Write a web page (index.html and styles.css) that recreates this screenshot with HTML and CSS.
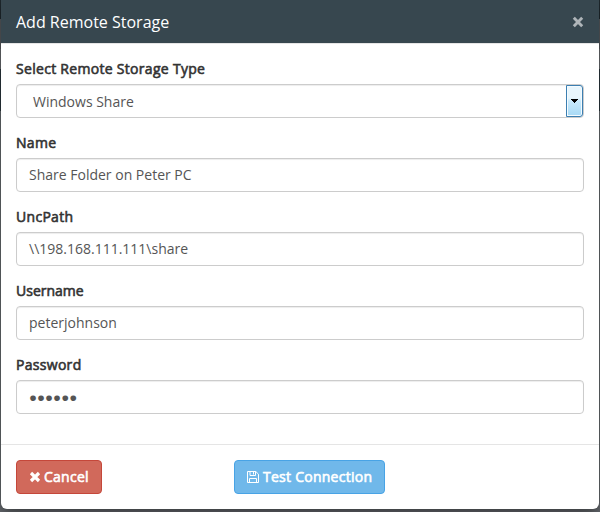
FILE: index.html
```html
<!DOCTYPE html>
<html lang="en">
<head>
<meta charset="utf-8">
<title>Add Remote Storage</title>
<link rel="stylesheet" href="styles.css">
</head>
<body>
<form class="modal">
  <header class="modal-header">
    <h1 class="modal-title">Add Remote Storage</h1>
    <button class="close" type="button" aria-label="Close">
      <svg width="12" height="12" viewBox="0 0 12 12"><path d="M1.8 1.8 10.2 10.2M10.2 1.8 1.8 10.2" stroke="currentColor" stroke-width="2.9"/></svg>
    </button>
  </header>
  <main class="modal-body">
    <div class="field"><span class="label type">Select Remote Storage Type</span>
      <div class="control select"><span>Windows Share</span>
        <span class="arrow"><svg width="8" height="4" viewBox="0 0 8 4" shape-rendering="crispEdges"><path d="M0 0h7v1H6v1H5v1H4v1H3V3H2V2H1V1H0z"/></svg></span>
      </div></div>
    <div class="field"><span class="label">Name</span><div class="control"><span>Share Folder on Peter PC</span></div></div>
    <div class="field"><span class="label">UncPath</span><div class="control"><span>\\198.168.111.111\share</span></div></div>
    <div class="field"><span class="label user">Username</span><div class="control"><span>peterjohnson</span></div></div>
    <div class="field"><span class="label">Password</span><div class="control"><span class="dots">●●●●●●</span></div></div>
  </main>
  <footer class="modal-footer">
    <button class="btn btn-danger" type="button">
      <svg width="12" height="12" viewBox="0 0 12 12"><path d="M2 2 10 10M10 2 2 10" stroke="currentColor" stroke-width="3.2"/></svg>
      <span>Cancel</span>
    </button>
    <button class="btn btn-info" type="button">
      <svg width="12" height="12" viewBox="0 0 12 12" fill="none" stroke="currentColor"><path d="M.5.5h8.3l2.7 2.7v8.3H.5zM3 .5v4h5.5v-4M6.5 1v2.5M2.5 11.5v-4h7v4"/></svg>
      <span>Test Connection</span>
    </button>
  </footer>
</form>
</body>
</html>
```
FILE: styles.css
```css
* { box-sizing: border-box; }
body {
  margin: 0;
  height: 512px;
  overflow: hidden;
  background: linear-gradient(#1f292e 0 19px, #5a5d61 19px 49px, #6b6e72 49px 69px, #2b383e 69px 111px, #696d72 111px);
  font-family: "Open Sans", "Noto Sans", sans-serif;
  font-size: 14px;
  line-height: 20px;
  color: #555;
}
.modal {
  width: 598px;
  height: 509px;
  margin: 0 1px;
  background: #fff;
  border-radius: 0 0 6px 6px;
  box-shadow: 0 5px 15px rgba(0, 0, 0, .5);
  overflow: hidden;
}
.modal-header {
  display: flex;
  align-items: center;
  justify-content: space-between;
  height: 44px;
  padding: 1px 15px 0;
  background: #37474f;
  border-bottom: 1px solid #e5e5e5;
}
.modal-title { margin: 0; font-size: 16px; font-weight: 400; color: #fff; }
.close { display: flex; padding: 0; border: 0; background: none; color: #afb5b9; }
.modal-body { height: 400px; padding: 15px 15px 0; }
.field { height: 59px; margin-bottom: 15px; }
.label { display: block; height: 25px; color: #333; letter-spacing: .3px; -webkit-text-stroke: .6px currentColor; }
.label.user { letter-spacing: 0; }
.control {
  display: flex;
  align-items: center;
  height: 34px;
  padding: 0 12px;
  border: 1px solid #ccc;
  border-radius: 4px;
  box-shadow: inset 0 1px 1px rgba(0, 0, 0, .075);
}
.select { justify-content: space-between; padding: 0 0 0 16px; }
.select > span:first-child { padding-top: 2px; }
.dots { font-size: 13.3px; }
.arrow {
  display: flex;
  align-items: center;
  justify-content: center;
  width: 17px;
  height: 32px;
  border: 1px solid #3c7fb1;
  border-radius: 0 3px 3px 0;
  box-shadow: inset 0 0 0 1px #f4fbff;
  background: linear-gradient(#e8f6fd 0 40%, #c9eafc 50%, #a7d9f5);
  color: #000;
}
.arrow svg { margin-left: 1px; }
.modal-footer { display: flex; height: 65px; padding: 15px; border-top: 1px solid #e5e5e5; }
.btn {
  display: flex;
  align-items: center;
  gap: 4px;
  height: 34px;
  padding: 0 12px;
  border: 1px solid;
  border-radius: 4px;
  font: inherit;
  letter-spacing: .26px;
  color: #fff;
}
.btn span { white-space: nowrap; -webkit-text-stroke: .6px currentColor; }
.btn-danger { width: 86px; padding-right: 10px; gap: 3px; background: #d1695b; border-color: #c5473a; }
.btn-danger, .btn-info { justify-content: flex-start; }
.btn-info { width: 151px; padding-right: 8px; margin-left: 132px; background: #70b8ea; border-color: #48a3e5; }
```
